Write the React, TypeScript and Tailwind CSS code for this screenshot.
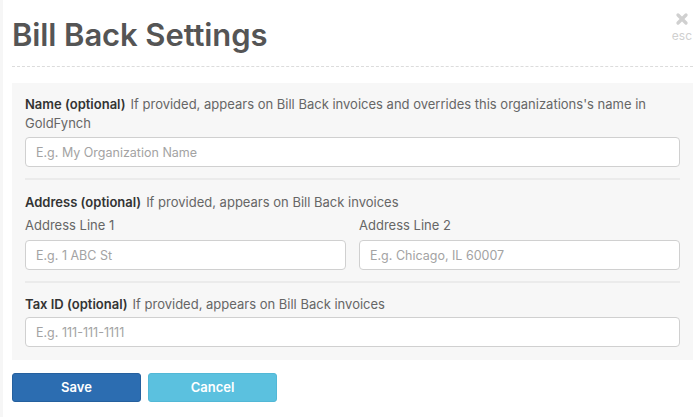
import { X } from "lucide-react";

const FONT = { fontFamily: "Inter, 'Helvetica Neue', Arial, sans-serif" };

function Field({ placeholder }: { placeholder: string }) {
  return (
    <input
      placeholder={placeholder}
      className="block w-full h-[30px] rounded-[4px] border border-[#d0d0d0] bg-white px-[10px] text-[12.5px] text-[#555] placeholder:text-[#a3a3a3] outline-none"
    />
  );
}

export default function App() {
  return (
    <div style={FONT} className="h-[417px] w-[700px] bg-white border-l-[3px] border-[#f6f6f6] relative">
      {/* close */}
      <div className="absolute right-[8px] top-[11px] flex flex-col items-center text-[#d0d0d0]">
        <X className="w-[16px] h-[16px]" strokeWidth={5} />
        <span className="text-[12px] leading-[14px] mt-[2px]">esc</span>
      </div>

      <div className="pl-[9px] pr-[7px]">
        <h1 className="pt-[15px] text-[31px] leading-[40px] font-semibold text-[#555] tracking-[-0.1px]">Bill Back Settings</h1>
        <div className="mt-[11px] border-t border-dashed border-[#dcdcdc]" />

        <div className="mt-[16px] bg-[#f7f7f7] px-[13px] pt-[12px] pb-[13px] text-[13px] leading-[19px]">
          {/* name */}
          <p className="text-[#666]">
            <span className="font-semibold text-[#333] mr-[5px]">Name (optional)</span>If provided, appears on Bill Back invoices and overrides this organizations's name in GoldFynch
          </p>
          <div className="mt-[4px]">
            <Field placeholder="E.g. My Organization Name" />
          </div>
          <div className="mt-[11px] h-[2px] bg-[#ebebeb]" />

          {/* address */}
          <p className="mt-[13px] text-[#666]">
            <span className="font-semibold text-[#333] mr-[5px]">Address (optional)</span>If provided, appears on Bill Back invoices
          </p>
          <div className="mt-[4px] grid grid-cols-2 gap-[13px]">
            <div>
              <div className="text-[#666] mb-[5px]">Address Line 1</div>
              <Field placeholder="E.g. 1 ABC St" />
            </div>
            <div>
              <div className="text-[#666] mb-[5px]">Address Line 2</div>
              <Field placeholder="E.g. Chicago, IL 60007" />
            </div>
          </div>
          <div className="mt-[11px] h-[2px] bg-[#ebebeb]" />

          {/* tax id */}
          <p className="mt-[12px] text-[#666]">
            <span className="font-semibold text-[#333] mr-[5px]">Tax ID (optional)</span>If provided, appears on Bill Back invoices
          </p>
          <div className="mt-[3px]">
            <Field placeholder="E.g. 111-111-1111" />
          </div>
        </div>

        <div className="mt-[13px] flex gap-[7px]">
          <button className="w-[129px] h-[29px] rounded-[3px] border border-[#25609e] bg-[#2c6db1] text-white text-[13px] font-semibold">Save</button>
          <button className="w-[129px] h-[29px] rounded-[3px] border border-[#52b8d6] bg-[#5bc1df] text-white text-[13px] font-semibold">Cancel</button>
        </div>
      </div>
    </div>
  );
}
